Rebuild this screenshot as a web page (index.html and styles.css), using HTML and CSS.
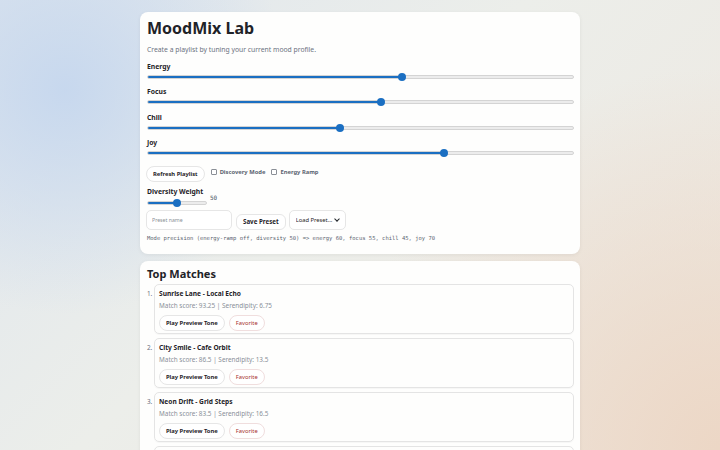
FILE: index.html
```html
<!DOCTYPE html>
<html lang="en">
<head>
    <meta charset="UTF-8">
    <meta name="viewport" content="width=device-width, initial-scale=1.0">
    <title>MoodMix Lab</title>
    <link rel="stylesheet" href="styles.css">
</head>
<body>
    <main class="page">
        <section class="card">
            <h1>MoodMix Lab</h1>
            <p class="lead">Create a playlist by tuning your current mood profile.</p>

            <label class="field-label" for="energy">Energy</label>
            <input class="range" type="range" id="energy" min="0" max="100" value="60" style="--fill: 60%">

            <label class="field-label" for="focus">Focus</label>
            <input class="range" type="range" id="focus" min="0" max="100" value="55" style="--fill: 55%">

            <label class="field-label" for="chill">Chill</label>
            <input class="range" type="range" id="chill" min="0" max="100" value="45" style="--fill: 45%">

            <label class="field-label" for="joy">Joy</label>
            <input class="range" type="range" id="joy" min="0" max="100" value="70" style="--fill: 70%">

            <div class="controls">
                <button class="pill" id="refreshBtn">Refresh Playlist</button>
                <label class="check"><input type="checkbox" id="discovery"> Discovery Mode</label>
                <label class="check"><input type="checkbox" id="ramp"> Energy Ramp</label>
            </div>

            <label class="field-label" for="diversity">Diversity Weight</label>
            <div class="diversity">
                <input class="range range-small" type="range" id="diversity" min="0" max="100" value="50" style="--fill: 50%">
                <span class="value">50</span>
            </div>

            <div class="presets">
                <input class="text-input" type="text" id="presetName" placeholder="Preset name">
                <button class="pill pill-save" id="savePresetBtn">Save Preset</button>
                <div class="select-wrap">
                    <select class="select" id="loadPreset">
                        <option value="">Load Preset...</option>
                    </select>
                </div>
            </div>

            <p class="debug">Mode precision (energy-ramp off, diversity 50) =&gt; energy 60, focus 55, chill 45, joy 70</p>
        </section>

        <section class="card">
            <h2>Top Matches</h2>
            <ol class="matches">
                <li class="match">
                    <div class="match-title">Sunrise Lane - Local Echo</div>
                    <div class="match-meta">Match score: 93.25 | Serendipity: 6.75</div>
                    <div class="match-actions">
                        <button class="pill">Play Preview Tone</button>
                        <button class="pill pill-fav">Favorite</button>
                    </div>
                </li>
                <li class="match">
                    <div class="match-title">City Smile - Cafe Orbit</div>
                    <div class="match-meta">Match score: 86.5 | Serendipity: 13.5</div>
                    <div class="match-actions">
                        <button class="pill">Play Preview Tone</button>
                        <button class="pill pill-fav">Favorite</button>
                    </div>
                </li>
                <li class="match">
                    <div class="match-title">Neon Drift - Grid Steps</div>
                    <div class="match-meta">Match score: 83.5 | Serendipity: 16.5</div>
                    <div class="match-actions">
                        <button class="pill">Play Preview Tone</button>
                        <button class="pill pill-fav">Favorite</button>
                    </div>
                </li>
                <li class="match">
                    <div class="match-title">Velvet Hours - Low Tide</div>
                    <div class="match-meta">Match score: 80.75 | Serendipity: 19.25</div>
                    <div class="match-actions">
                        <button class="pill">Play Preview Tone</button>
                        <button class="pill pill-fav">Favorite</button>
                    </div>
                </li>
            </ol>
        </section>
    </main>
</body>
</html>
```

FILE: styles.css
```css
* {
    box-sizing: border-box;
}
body {
    margin: 0;
    min-height: 100vh;
    font-family: "Noto Sans", "Open Sans", sans-serif;
    color: #1f2328;
    background:
        radial-gradient(circle at 9% 20%, rgba(196, 214, 238, 0.9), transparent 30%),
        radial-gradient(circle at 100% 100%, rgba(236, 214, 196, 0.95), transparent 45%),
        linear-gradient(135deg, #dfe6ee 0%, #eceeea 45%, #eee7df 100%);
    background-attachment: fixed;
}
.page {
    width: 440px;
    margin: 0 auto;
    padding-top: 12px;
}
.card {
    background-color: #fefefd;
    border-radius: 8px;
    box-shadow: 0 1px 4px rgba(0, 0, 0, 0.06);
    padding: 6px 6px 11px 7px;
    margin-bottom: 7px;
}
h1 {
    margin: 0;
    font-size: 16px;
    line-height: 20px;
    font-weight: 700;
}
h2 {
    margin: 0 0 3px;
    font-size: 11px;
    line-height: 14px;
    font-weight: 700;
}
.lead {
    margin: 7px 0 7px;
    font-size: 6.8px;
    line-height: 10px;
    color: #6b7280;
}
.field-label {
    display: block;
    font-size: 6.8px;
    line-height: 10px;
    font-weight: 700;
}

/* sliders: filled part comes from --fill */
.range {
    -webkit-appearance: none;
    appearance: none;
    display: block;
    width: 427px;
    height: 8px;
    margin: 1px 0 6.3px;
    background: transparent;
}
.range::-webkit-slider-runnable-track {
    height: 4px;
    border-radius: 2px;
    border: 1px solid #d4d4d4;
    background: linear-gradient(to right, #1b6fc2 var(--fill), #ececec var(--fill));
}
.range::-webkit-slider-thumb {
    -webkit-appearance: none;
    width: 8px;
    height: 8px;
    margin-top: -3px;
    border-radius: 50%;
    background: #1b6fc2;
    border: none;
}
.range-small {
    width: 60px;
    margin: 0;
}

.controls {
    display: flex;
    align-items: center;
    gap: 6px;
    margin: 8px 0 5px;
}
.pill {
    font-family: inherit;
    font-size: 5.8px;
    font-weight: 700;
    line-height: 8px;
    color: #1f2328;
    background-color: #fff;
    border: 1px solid #e6e6e6;
    border-radius: 8px;
    padding: 3px 6px;
    cursor: pointer;
}
.pill:hover {
    background-color: #f5f5f5;
}
.controls .pill {
    margin-left: -1px;
    margin-top: 1px;
}
.check {
    display: flex;
    align-items: center;
    gap: 3px;
    font-size: 5.8px;
    font-weight: 700;
    color: #5b6470;
    margin-top: -2px;
}
.check input {
    -webkit-appearance: none;
    appearance: none;
    width: 6px;
    height: 6px;
    margin: 0;
    border: 1px solid #8a8f96;
    border-radius: 1px;
    background-color: #fff;
}
.diversity {
    display: flex;
    align-items: flex-start;
    gap: 3px;
    margin-top: 2px;
}
.value {
    font-family: "DejaVu Sans Mono", monospace;
    font-size: 6px;
    line-height: 8px;
    color: #4b5563;
    margin-top: -5px;
}
.presets {
    display: flex;
    align-items: flex-end;
    gap: 4px;
    margin-top: 3px;
}
.text-input {
    width: 86px;
    height: 20px;
    padding: 0 5px;
    font-family: inherit;
    font-size: 5.2px;
    border: 1px solid #e6e6e6;
    border-radius: 5px;
    margin-left: -1px;
}
.text-input::placeholder {
    color: #8a8f96;
}
.pill-save {
    height: 16px;
    font-size: 6.2px;
    border-radius: 6px;
    padding: 0 6px;
}

/* select with a drawn chevron on top */
.select-wrap {
    position: relative;
    margin-left: -1px;
}
.select-wrap::after {
    content: "";
    position: absolute;
    right: 7px;
    top: 7px;
    width: 3px;
    height: 3px;
    border-right: 1.2px solid #1f2328;
    border-bottom: 1.2px solid #1f2328;
    transform: rotate(45deg);
    pointer-events: none;
}
.select {
    -webkit-appearance: none;
    appearance: none;
    display: block;
    width: 57px;
    height: 20px;
    font-family: inherit;
    font-size: 5.8px;
    color: #1f2328;
    background-color: #fff;
    border: 1px solid #e6e6e6;
    border-radius: 5px;
    padding: 0 4px 0 6px;
}
.debug {
    margin: 3px 0 0;
    font-family: "DejaVu Sans Mono", monospace;
    font-size: 5.5px;
    line-height: 10px;
    color: #5b6470;
}

/* result list */
.matches {
    margin: 0;
    padding-left: 7px;
    font-size: 6.4px;
    color: #6b7280;
}
.match {
    border: 1px solid #e4e4e4;
    border-radius: 5px;
    padding: 4px 4px 2px;
    margin-bottom: 4px;
    box-shadow: 0 1px 1px rgba(0, 0, 0, 0.03);
}
.match::marker {
    font-size: 6.4px;
}
.match-title {
    font-size: 6.6px;
    line-height: 10px;
    font-weight: 700;
    color: #1f2328;
}
.match-meta {
    margin-top: 2px;
    font-size: 6.4px;
    line-height: 10px;
    color: #8a9099;
}
.match-actions {
    display: flex;
    gap: 4px;
    margin-top: 4px;
}
.pill-fav {
    color: #a8322c;
    font-weight: 400;
    border-color: #f0dede;
}
```
